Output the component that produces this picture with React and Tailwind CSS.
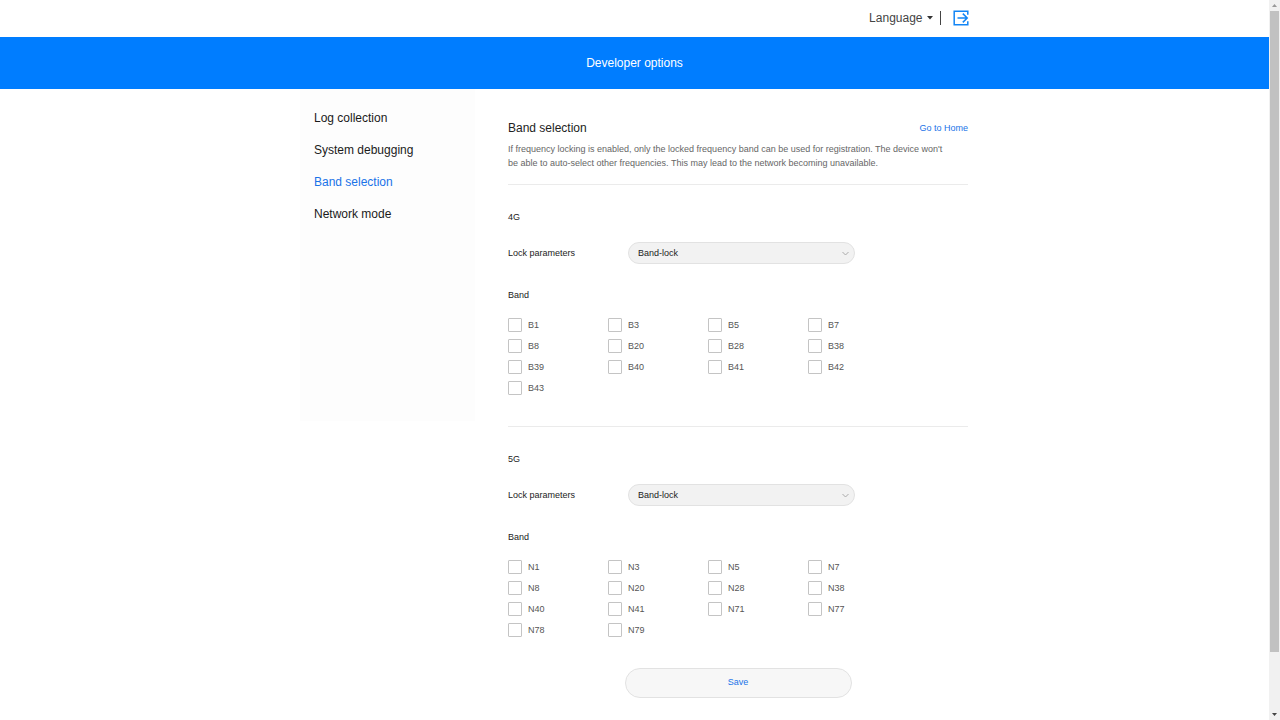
import { useState } from 'react';

const menuItems = ['Log collection', 'System debugging', 'Band selection', 'Network mode'];

const networks = [
  {
    id: '4g',
    name: '4G',
    bands: ['B1', 'B3', 'B5', 'B7', 'B8', 'B20', 'B28', 'B38', 'B39', 'B40', 'B41', 'B42', 'B43']
  },
  {
    id: '5g',
    name: '5G',
    bands: ['N1', 'N3', 'N5', 'N7', 'N8', 'N20', 'N28', 'N38', 'N40', 'N41', 'N71', 'N77', 'N78', 'N79']
  }
];

const TopBar = () => (
  <header className="mx-auto flex h-[37px] w-full max-w-[668px] items-center justify-end pb-px text-[12px] text-[#444]">
    <button className="flex items-center gap-1 leading-4">
      Language
      <svg width="6" height="4" viewBox="0 0 6 4" fill="#333"><path d="M0 0h6L3 3.5z" /></svg>
    </button>
    <span className="ml-[7px] h-[14px] w-px bg-[#444]" />
    <button aria-label="Log out" className="ml-3">
      <svg width="16" height="16" viewBox="0 0 16 16" fill="none" stroke="#1285f5" strokeWidth="1.5">
        <path d="M14.8 4.8V1.2H1.2v13.6h13.6v-3.6" />
        <path d="M4.5 8h10M9.8 3.6 14.2 8l-4.4 4.4" />
      </svg>
    </button>
  </header>
);

const SideMenu = ({ active, onSelect }) => (
  <nav className="h-[332px] w-[175px] shrink-0 bg-[#fdfdfd] pt-[13px] pl-[14px]">
    {menuItems.map((item) => (
      <a
        key={item}
        href="#"
        onClick={() => onSelect(item)}
        className={item === active ? 'block text-[12px] leading-8 text-[#1a73e8]' : 'block text-[12px] leading-8 text-[#1a1a1a]'}
      >
        {item}
      </a>
    ))}
  </nav>
);

const NetworkSection = ({ network, checked, onToggle }) => (
  <section className="border-t border-[#ebebeb] pt-6 text-[9px] text-[#222]">
    <h3 className="leading-4">{network.name}</h3>
    <div className="mt-[17px] flex items-center">
      <label htmlFor={`lock-${network.id}`} className="w-[120px] leading-4">Lock parameters</label>
      <div className="relative w-[227px]">
        <select
          id={`lock-${network.id}`}
          className="block h-[22px] w-full appearance-none rounded-full border border-[#e2e2e2] bg-[#f2f2f2] px-[9px] pt-px text-[9px] text-[#222]"
        >
          <option>Band-lock</option>
          <option>Auto</option>
        </select>
        <svg className="pointer-events-none absolute top-[9px] right-[6px]" width="7" height="5" viewBox="0 0 7 5" fill="none" stroke="#aaa">
          <path d="M.5 1l3 3 3-3" />
        </svg>
      </div>
    </div>
    <fieldset className="mt-[23px]">
      <legend className="leading-4">Band</legend>
      <div className="mt-[15px] grid grid-cols-[repeat(4,100px)] gap-y-[7px]">
        {network.bands.map((band) => (
          <label key={band} className="flex items-center gap-[6px] leading-[14px] text-[#555]">
            <input
              type="checkbox"
              checked={!!checked[band]}
              onChange={() => onToggle(band)}
              className="size-[14px] appearance-none rounded-[1px] border border-[#c4c4c4] bg-white checked:bg-[#007dff]"
            />
            {band}
          </label>
        ))}
      </div>
    </fieldset>
  </section>
);

const ScrollTrack = () => (
  <div className="flex h-screen w-[11px] shrink-0 flex-col items-center bg-[#f1f1f1]">
    <svg className="my-1 shrink-0" width="5" height="3" viewBox="0 0 5 3" fill="#999"><path d="M0 3h5L2.5 0z" /></svg>
    <div className="h-[641px] w-[9px] bg-[#c1c1c1]" />
    <svg className="mt-auto mb-1 shrink-0" width="5" height="3" viewBox="0 0 5 3" fill="#444"><path d="M0 0h5L2.5 3z" /></svg>
  </div>
);

export default function App() {
  const [active, setActive] = useState('Band selection');
  const [checked, setChecked] = useState({});

  const toggle = (band) => setChecked({ ...checked, [band]: !checked[band] });

  return (
    <div className="flex bg-white font-['Liberation_Sans',Arial,sans-serif]">
      <div className="min-w-0 flex-1">
        <TopBar />
        <h1 className="bg-[#007dff] text-center text-[12px] leading-[52px] text-white">Developer options</h1>
        <div className="mx-auto flex w-full max-w-[669px] items-start">
          <SideMenu active={active} onSelect={setActive} />
          <main className="ml-[33px] max-w-[460px] min-w-0 flex-1 pt-[29px] pb-[22px]">
            <div className="flex items-center justify-between leading-5">
              <h2 className="text-[12px] text-[#222]">Band selection</h2>
              <a href="#" className="text-[9px] text-[#1a73e8]">Go to Home</a>
            </div>
            <p className="mt-1 mb-[14px] max-w-[440px] text-[9px] leading-[14px] text-[#666]">
              If frequency locking is enabled, only the locked frequency band can be used for registration. The device won't be able to auto-select other frequencies. This may lead to the network becoming unavailable.
            </p>
            <div className="flex flex-col gap-[31px]">
              {networks.map((network) => (
                <NetworkSection key={network.id} network={network} checked={checked} onToggle={toggle} />
              ))}
            </div>
            <button className="mx-auto mt-[31px] block h-[30px] w-[227px] rounded-full border border-[#e2e2e2] bg-[#f7f7f7] text-[9px] text-[#1a73e8]">
              Save
            </button>
          </main>
        </div>
      </div>
      <ScrollTrack />
    </div>
  );
}
